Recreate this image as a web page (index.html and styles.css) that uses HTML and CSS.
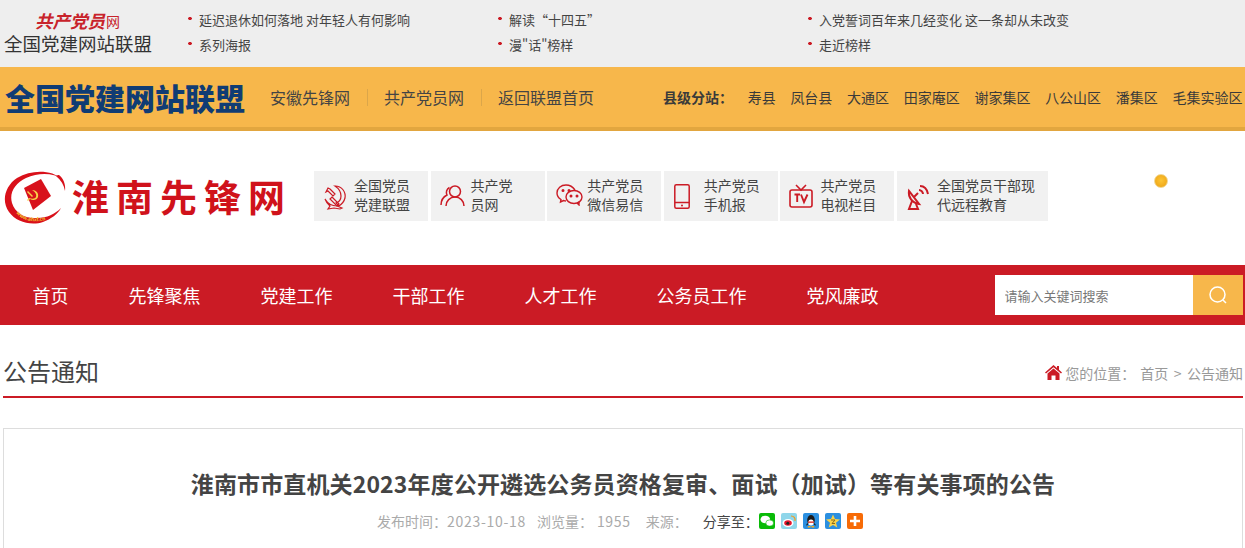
FILE: index.html
```html
<!DOCTYPE html>
<html lang="zh-CN">
<head>
    <meta charset="UTF-8">
    <meta name="viewport" content="width=device-width, initial-scale=1.0">
    <title>淮南先锋网 - 公告通知</title>
    <link rel="stylesheet" href="styles.css">
</head>
<body>
    <div class="top-bar">
        <div class="union-logo">
            <div class="union-script"><span class="script-words">共产党员</span><span class="script-net">网</span></div>
            <div class="union-name">全国党建网站联盟</div>
        </div>
        <ul class="top-news">
            <li>延迟退休如何落地 对年轻人有何影响</li>
            <li>解读“十四五”</li>
            <li>入党誓词百年来几经变化 这一条却从未改变</li>
            <li>系列海报</li>
            <li>漫"话"榜样</li>
            <li>走近榜样</li>
        </ul>
    </div>

    <div class="union-bar">
        <div class="union-title">全国党建网站联盟</div>
        <div class="union-links">
            <a>安徽先锋网</a><i></i><a>共产党员网</a><i></i><a>返回联盟首页</a>
        </div>
        <div class="county-links">
            <b>县级分站：</b>
            <a>寿县</a><a>凤台县</a><a>大通区</a><a>田家庵区</a><a>谢家集区</a><a>八公山区</a><a>潘集区</a><a>毛集实验区</a>
        </div>
    </div>

    <div class="brand-row">
        <div class="site-logo">
            <svg class="site-mark" width="62" height="56" viewBox="0 0 62 56">
                <path d="M58 9C48 0 28-1 13 8C1 16-3 31 5 42C12 52 27 56 39 52C47 49 54 44 57 38C51 44 43 48 33 48C21 49 11 43 8 33C5 23 11 13 22 8C35 2 50 3 58 9Z" fill="#d9101a"/>
                <path d="M55 5C59 8 62 14 61 21C60 15 57 10 52 6C53 5 54 5 55 5Z" fill="#d9101a"/>
                <path d="M20 18L37 9L47 26L29 40Z" fill="#d8121c"/>
                <path d="M28 20c4 0 7 3 6 7c-1 3-5 4-8 2l-2 2l-1-1l2-2c3 1 6 1 7-1c1-3-1-5-4-7ZM24 21l5 5l-1 1l-5-5Z" fill="#f7d24a"/>
                <path id="ring-path" d="M12 43C18 51 30 53 42 50" fill="none"/>
                <text class="site-url"><textPath href="#ring-path">www.ahxf.cn</textPath></text>
            </svg>
            <div class="site-name">淮南先锋网</div>
        </div>
        <div class="quick-links">
            <a class="quick-tile">
                <svg class="quick-icon" width="24" height="26" viewBox="0 0 24 26" fill="none" stroke="#cb1b25" stroke-width="1.2">
                    <path d="M12 2C19 2 23 8 22 14C21 18 19 20 16 22L13 19C16 18 18 15 18 12C18 8 15 4 12 2Z"/>
                    <path d="M7 5L12 10L10 12L5 7L3 8L5 4Z"/>
                    <path d="M9 13L16 20L14 22L7 15Z"/>
                    <path d="M2 15C5 20 10 22 14 22L19 24L17 25L11 24L5 25L7 22C5 20 3 18 2 15Z"/>
                </svg>
                <span>全国党员<br>党建联盟</span>
            </a>
            <a class="quick-tile">
                <svg class="quick-icon" width="25" height="24" viewBox="0 0 25 24" fill="none" stroke="#cb1b25" stroke-width="1.5">
                    <circle cx="15" cy="7.5" r="5.5"/>
                    <path d="M9.5 3.5A5.5 5.5 0 0 0 7 11C3 13 1 17 1 21"/>
                    <path d="M6 22C6 17 10 13 15 13C20 13 24 17 24 22"/>
                </svg>
                <span>共产党<br>员网</span>
            </a>
            <a class="quick-tile">
                <svg class="quick-icon" width="27" height="22" viewBox="0 0 27 22" fill="none" stroke="#cb1b25" stroke-width="1.4">
                    <path d="M19 6C17 3 14 1 10 1C5 1 1 4.500 1 9C1 11.500 2.500 14 5 15.500L4.500 18L7.500 16.500C8.500 16.800 9 17 10 17"/>
                    <ellipse cx="18" cy="13" rx="8" ry="6.500"/>
                    <path d="M21 19L23 21L23 17.500"/>
                    <circle cx="7" cy="6.500" r=".8" fill="#cb1b25"/>
                    <circle cx="13" cy="6.500" r=".8" fill="#cb1b25"/>
                    <circle cx="15" cy="12" r=".8" fill="#cb1b25"/>
                    <circle cx="21" cy="12" r=".8" fill="#cb1b25"/>
                </svg>
                <span>共产党员<br>微信易信</span>
            </a>
            <a class="quick-tile">
                <svg class="quick-icon phone-icon" width="16" height="25" viewBox="0 0 16 25" fill="none" stroke="#cb1b25" stroke-width="1.5">
                    <rect x=".8" y=".8" width="14.400" height="23.400" rx="1.500"/>
                    <path d="M1 18.500H15"/>
                    <circle cx="8" cy="21.500" r="1" fill="#cb1b25" stroke="none"/>
                </svg>
                <span>共产党员<br>手机报</span>
            </a>
            <a class="quick-tile">
                <svg class="quick-icon" width="24" height="24" viewBox="0 0 24 24" fill="none" stroke="#cb1b25" stroke-width="1.6">
                    <rect x="1" y="6" width="22" height="17" rx="2"/>
                    <path d="M7 1L12 6L17 1"/>
                    <path d="M5.500 10.500H11M8.200 10.500V18M12 10.500L15 18L18.500 10.500" stroke-width="1.900"/>
                </svg>
                <span>共产党员<br>电视栏目</span>
            </a>
            <a class="quick-tile quick-tile-wide">
                <svg class="quick-icon" width="24" height="27" viewBox="0 0 24 27" fill="none" stroke="#cb1b25" stroke-width="2">
                    <path d="M3 7C2 13 6 19 13 20L3 7Z"/>
                    <path d="M8 13L12 9"/>
                    <path d="M6 17L3 25H12L10 20"/>
                    <path d="M13 6C15 6 17 8 17 10"/>
                    <path d="M14 2C18 2 21 5 22 10"/>
                </svg>
                <span>全国党员干部现<br>代远程教育</span>
            </a>
        </div>
        <span class="gold-dot"></span>
    </div>

    <nav class="main-nav">
        <div class="nav-items">
            <a>首页</a><a>先锋聚焦</a><a>党建工作</a><a>干部工作</a><a>人才工作</a><a>公务员工作</a><a>党风廉政</a>
        </div>
        <form class="search-box">
            <input type="text" placeholder="请输入关键词搜索">
            <button type="button">
                <svg width="20" height="20" viewBox="0 0 20 20" fill="none" stroke="#fff" stroke-width="1.500">
                    <circle cx="9.500" cy="9.500" r="7.500"/>
                    <path d="M15 15L18 18"/>
                </svg>
            </button>
        </form>
    </nav>

    <div class="section-head">
        <h2>公告通知</h2>
        <div class="crumbs">
            <svg width="17" height="15" viewBox="0 0 17 15">
                <path d="M8.500 0L12 3V1H14V4.800L17 7.500L16 8.600L8.500 2.200L1 8.600L0 7.500Z" fill="#cb1b25"/>
                <path d="M8.500 3.500L14.500 8.500V15H10.500V10.500H6.500V15H2.500V8.500Z" fill="#cb1b25"/>
            </svg>
            <span class="crumb-label">您的位置：</span><a>首页</a><span class="crumb-sep">&gt;</span><a>公告通知</a>
        </div>
    </div>

    <div class="article-card">
        <h1>淮南市市直机关2023年度公开遴选公务员资格复审、面试（加试）等有关事项的公告</h1>
        <div class="article-meta">
            <span class="meta-label">发布时间：</span>
            <span class="meta-date">2023-10-18</span>
            <span class="meta-views">浏览量：</span>
            <span class="meta-count">1955</span>
            <span class="meta-source">来源：</span>
            <span class="share-label">分享至：</span>
            <div class="share-icons">
                <svg width="16" height="16" viewBox="0 0 16 16">
                    <rect width="16" height="16" rx="2" fill="#09bb07"/>
                    <ellipse cx="6.300" cy="6.500" rx="4.800" ry="3.800" fill="#fff"/>
                    <ellipse cx="10.700" cy="10" rx="3.900" ry="3.100" fill="#fff" stroke="#09bb07" stroke-width=".6"/>
                </svg>
                <svg width="16" height="16" viewBox="0 0 16 16">
                    <rect width="16" height="16" rx="2" fill="#8fd6ea"/>
                    <ellipse cx="7" cy="10" rx="5.500" ry="4" fill="#fff"/>
                    <ellipse cx="7" cy="10" rx="3.800" ry="2.800" fill="#e6162d"/>
                    <circle cx="6.800" cy="10.200" r="1.500" fill="#222"/>
                    <path d="M10 3C13 3 14.500 5 14 8" fill="none" stroke="#f59a1b" stroke-width="1.200"/>
                </svg>
                <svg width="16" height="16" viewBox="0 0 16 16">
                    <rect width="16" height="16" rx="2" fill="#2b8fe0"/>
                    <ellipse cx="8" cy="7" rx="3.800" ry="5" fill="#1b1b1b"/>
                    <ellipse cx="8" cy="9.500" rx="2.700" ry="2.900" fill="#fff"/>
                    <path d="M4.500 9.500L3 12.500L5 12ZM11.500 9.500L13 12.500L11 12Z" fill="#1b1b1b"/>
                    <path d="M5 13H7.500V14.500H4.500ZM8.500 13H11L11.500 14.500H8.500Z" fill="#f4a91f"/>
                    <path d="M5 8.500H11V9.800H5Z" fill="#d9261c"/>
                </svg>
                <svg width="16" height="16" viewBox="0 0 16 16">
                    <rect width="16" height="16" rx="2" fill="#2b8fe0"/>
                    <path d="M8 1.500L10 6L15 6.500L11 9.700L12.300 14.500L8 12L3.700 14.500L5 9.700L1 6.500L6 6Z" fill="#f8d34a"/>
                    <path d="M6 7H10L7 10.500H10" fill="none" stroke="#8a6a1a" stroke-width="1"/>
                </svg>
                <svg width="16" height="16" viewBox="0 0 16 16">
                    <rect width="16" height="16" rx="2" fill="#f76b07"/>
                    <path d="M6.700 3H9.300V6.700H13V9.300H9.300V13H6.700V9.300H3V6.700H6.700Z" fill="#fff"/>
                </svg>
            </div>
        </div>
    </div>
</body>
</html>
```
FILE: styles.css
```css
html, body {
    margin: 0;
    height: 100%;
    overflow: hidden;
}
body {
    font-family: "Noto Sans CJK SC", "Liberation Sans", sans-serif;
    color: #333;
    background-color: white;
}
a {
    color: inherit;
    text-decoration: none;
}

/* top strip */
.top-bar {
    display: flex;
    height: 67px;
    background-color: #eeeeee;
}
.union-logo {
    width: 188px;
    padding: 11px 0 0 4px;
    box-sizing: border-box;
}
.union-script {
    display: flex;
    align-items: center;
    height: 20px;
    padding-left: 31px;
    color: #c8232b;
}
.script-words {
    font-size: 17.500px;
    line-height: 20px;
    font-style: italic;
    font-weight: bold;
}
.script-net {
    font-size: 14px;
    line-height: 20px;
    margin-left: 1px;
}
.union-name {
    margin-top: 1px;
    font-size: 18.500px;
    line-height: 22px;
    color: #333;
}
.top-news {
    flex: 1;
    display: grid;
    grid-template-columns: repeat(3, 310px);
    grid-auto-rows: 25px;
    margin: 0;
    padding: 7px 0 0;
    list-style: none;
    font-size: 13px;
    color: #444;
}
.top-news li {
    padding-left: 11px;
    line-height: 25px;
    background: radial-gradient(circle at 2px 50%, #cb1b25 1.500px, transparent 2px) no-repeat;
    background-position: 0 -1px;
}

/* orange union bar */
.union-bar {
    display: flex;
    align-items: center;
    height: 60px;
    padding-left: 5px;
    background-color: #f7b74b;
    border-bottom: 4px solid #e2a63f;
}
.union-title {
    width: 265px;
    font-size: 30px;
    line-height: 60px;
    font-weight: 900;
    color: #103c74;
    white-space: nowrap;
}
.union-links {
    display: flex;
    align-items: center;
    width: 393px;
    font-size: 16px;
    color: #444;
}
.union-links i {
    width: 1px;
    height: 17px;
    margin: 0 16.500px;
    background-color: #dba64a;
}
.county-links {
    display: flex;
    align-items: center;
    gap: 14.700px;
    font-size: 14px;
    color: #3a3a3a;
    white-space: nowrap;
}
.county-links b {
    width: 70px;
}

/* logo row */
.brand-row {
    display: flex;
    align-items: center;
    height: 130px;
    padding: 0 0 4px 4px;
}
.site-logo {
    display: flex;
    align-items: center;
    width: 310px;
}
.site-mark {
    margin-top: 4px;
}
.site-name {
    margin-left: 6px;
    font-size: 37px;
    line-height: 44px;
    font-weight: bold;
    letter-spacing: 7px;
    color: #d0121b;
    white-space: nowrap;
}
.site-url {
    font-size: 5px;
    font-weight: bold;
    fill: #f2c230;
}
.quick-links {
    display: flex;
    gap: 2.600px;
}
.quick-tile {
    display: flex;
    align-items: center;
    width: 114px;
    height: 50px;
    padding: 0 0 2px 40px;
    background-color: #f1f1f1;
    font-size: 14px;
    line-height: 19px;
    color: #444;
    box-sizing: border-box;
    position: relative;
}
.quick-tile-wide {
    width: 151px;
}
.quick-icon {
    position: absolute;
    left: 9px;
    top: 13px;
}
.phone-icon {
    left: 10px;
}
.gold-dot {
    width: 12px;
    height: 12px;
    margin: -30px 0 0 106px;
    border-radius: 50%;
    border: 1px solid #f1d68f;
    background: radial-gradient(circle at 50% 45%, #fdc534, #eb9f12);
}

/* red nav */
.main-nav {
    display: flex;
    align-items: center;
    justify-content: space-between;
    height: 60px;
    padding: 0 2px 0 32.500px;
    background-color: #cb1b25;
}
.nav-items {
    display: flex;
    gap: 60px;
    font-size: 18px;
    color: white;
}
.search-box {
    display: flex;
    height: 40px;
    margin: 0;
}
.search-box input {
    width: 198px;
    padding: 0 9.500px;
    border: none;
    outline: none;
    box-sizing: border-box;
    font-family: inherit;
    font-size: 13px;
}
.search-box input::placeholder {
    color: #777;
}
.search-box button {
    display: flex;
    align-items: center;
    justify-content: center;
    width: 50px;
    padding: 0;
    border: none;
    background-color: #f7b74b;
}

/* section heading */
.section-head {
    display: flex;
    align-items: center;
    justify-content: space-between;
    height: 51px;
    padding-top: 20px;
    margin: 0 2px 0 3px;
    border-bottom: 2px solid #cb1b25;
}
.section-head h2 {
    margin: 0;
    font-size: 24px;
    font-weight: normal;
    color: #444;
}
.crumbs {
    display: flex;
    align-items: center;
    padding-top: 4px;
    font-size: 14px;
    color: #999;
}
.crumb-label {
    margin: 0 5px 0 3px;
}
.crumb-sep {
    margin: 0 5.500px;
}

/* article */
.article-card {
    margin: 30px 2px 0 3px;
    height: 200px;
    border: 1px solid #dddddd;
    text-align: center;
}
.article-card h1 {
    margin: 35px 0 0;
    font-size: 23px;
    line-height: 38px;
    font-weight: bold;
    letter-spacing: .13px;
    color: #444;
}
.article-meta {
    display: flex;
    align-items: center;
    margin-top: 9px;
    padding-left: 373px;
    font-size: 14px;
    line-height: 20px;
    color: #aaa;
}
.meta-date, .meta-count {
    letter-spacing: .7px;
}
.meta-date {
    margin-right: 11px;
}
.meta-views {
    margin-right: 4px;
}
.meta-count {
    margin-right: 15px;
}
.meta-source {
    margin-right: 15px;
}
.share-label {
    color: #444;
}
.share-icons {
    display: flex;
    gap: 6px;
}
```
